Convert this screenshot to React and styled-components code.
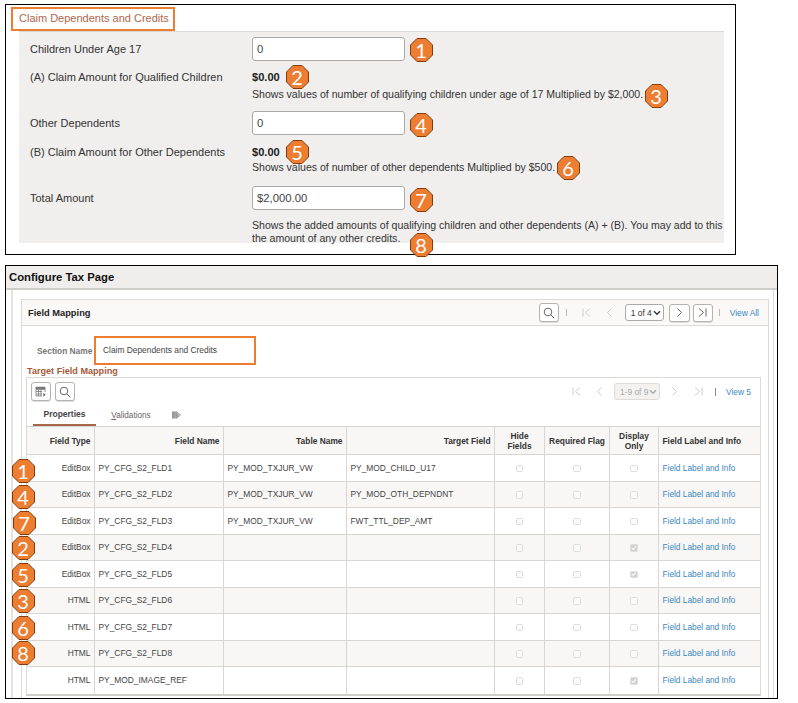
import React from "react";
import styled, { createGlobalStyle } from "styled-components";

const GlobalStyle = createGlobalStyle`
  html, body { margin: 0; padding: 0; background: #fff; }
  * { box-sizing: border-box; }
  body { font-family: "Liberation Sans", Arial, sans-serif; color: #333; }
`;

const Page = styled.div`
  position: relative;
  width: 798px;
  height: 703px;
  padding: 4px 0 0 5px;
  overflow: hidden;
`;

/* ---------- numbered callouts ---------- */

const BadgeWrap = styled.div`
  position: absolute;
  left: ${(p) => p.$x - 11.5}px;
  top: ${(p) => p.$y - 12}px;
  width: 23px;
  height: 24px;
  display: flex;
  align-items: center;
  justify-content: center;
  z-index: 5;

  svg {
    position: absolute;
    inset: 0;
  }

  span {
    position: relative;
    font-family: Lato, "Open Sans", sans-serif;
    font-size: 20px;
    line-height: 24px;
    color: #fff;
  }
`;

const Badge = ({ n, x, y }) => (
  <BadgeWrap $x={x} $y={y}>
    <svg width="23" height="24" viewBox="0 0 23 24">
      <polygon
        points="7,0.5 16,0.5 22.5,7 22.5,17 16,23.5 7,23.5 0.5,17 0.5,7"
        fill="#ed7d31"
        stroke="#843c0c"
      />
    </svg>
    <span>{n}</span>
  </BadgeWrap>
);

/* ---------- top screenshot: claim form ---------- */

const ClaimPanel = styled.section`
  width: 731px;
  height: 251px;
  border: 1px solid #000;
  padding-left: 13px;
`;

const ClaimTitleBar = styled.div`
  height: 26px;
  padding: 2px 0 0 0;
`;

const ClaimTitle = styled.h2`
  margin: 0 0 0 -8px;
  width: 164px;
  height: 24px;
  border: 2px solid #ed7d31;
  padding-left: 6px;
  font-size: 11px;
  font-weight: normal;
  line-height: 19px;
  color: #b0674a;
`;

const ClaimForm = styled.div`
  width: 705px;
  height: 212px;
  background: #f0efee;
  border-top: 1px solid #d9d9d9;
  padding: 5px 0 0 11px;
`;

const FormRow = styled.div`
  display: grid;
  grid-template-columns: 222px 1fr;
  align-items: ${(p) => (p.$top ? "start" : "center")};
  margin-top: ${(p) => p.$mt || 0}px;
`;

const FormLabel = styled.div`
  font-size: 11px;
  line-height: 13px;
  color: #333;
`;

const FormInput = styled.input`
  width: 153px;
  height: 24px;
  border: 1px solid #aaa;
  border-radius: 3px;
  background: #fff;
  padding: 0 4px;
  font-family: inherit;
  font-size: 11.3px;
  color: #444;
`;

const Amount = styled.div`
  font-size: 11.1px;
  font-weight: bold;
  line-height: 13px;
  color: #222;
`;

const Hint = styled.div`
  margin-top: ${(p) => p.$mt || 0}px;
  font-size: 10.55px;
  line-height: 12.5px;
  color: #333;
  white-space: nowrap;
`;

/* ---------- bottom screenshot: configure tax page ---------- */

const ConfigPanel = styled.section`
  margin-top: 10px;
  width: 773px;
  height: 434px;
  border: 1px solid #000;
  display: flex;
  flex-direction: column;
`;

const ConfigTitle = styled.h1`
  margin: 0;
  height: 24px;
  flex: none;
  background: #efeeec;
  border-bottom: 2px solid #cfcdca;
  padding-left: 3px;
  font-size: 11.3px;
  line-height: 22px;
  color: #111;
`;

const ConfigBody = styled.div`
  flex: 1;
  margin: 0 3px 0 5px;
  border-left: 2px solid #e6e4e1;
  border-right: 1px solid #ddd;
  padding: 9px 4px 0 8px;
  display: flex;
`;

const FieldBox = styled.div`
  flex: 1;
  border: 1px solid #dcdad7;
  border-bottom: 0;
  padding-right: 7px;
`;

const FieldHeader = styled.div`
  height: 26px;
  margin-right: -7px;
  background: #faf9f8;
  border-bottom: 1px solid #dcdad7;
  padding: 0 9px 0 6px;
  display: flex;
  align-items: center;
`;

const FieldTitle = styled.div`
  flex: 1;
  font-size: 9.3px;
  font-weight: bold;
  color: #222;
`;

const Pager = styled.div`
  display: flex;
  align-items: center;
  margin-left: auto;
`;

const SquareButton = styled.button`
  width: ${(p) => p.$w || 20}px;
  height: ${(p) => p.$h || 19}px;
  margin-left: ${(p) => p.$ml || 0}px;
  padding: 0;
  flex: none;
  display: flex;
  align-items: center;
  justify-content: center;
  background: #fff;
  border: 1px solid #b5b3b0;
  border-radius: 3px;
  box-shadow: 0 1px 0 #ddd;
`;

const PagerIcon = styled.span`
  width: 23px;
  margin-left: ${(p) => p.$ml || 0}px;
  flex: none;
  display: flex;
  justify-content: center;
`;

const Divider = styled.span`
  width: 1px;
  height: ${(p) => p.$h || 7}px;
  margin: 0 ${(p) => p.$mr || 0}px 0 ${(p) => p.$ml || 0}px;
  background: ${(p) => p.$color || "#bbb"};
  flex: none;
`;

const PageSelect = styled.div`
  width: ${(p) => p.$w}px;
  height: 17px;
  margin-left: 3.5px;
  flex: none;
  display: flex;
  align-items: center;
  justify-content: space-between;
  padding: 0 2px 0 5px;
  border: 1px solid ${(p) => (p.$disabled ? "#dedcd9" : "#aaa")};
  border-radius: 3px;
  background: ${(p) => (p.$disabled ? "#f3f2f1" : "#fff")};
  font-size: 8.4px;
  white-space: nowrap;
  color: ${(p) => (p.$disabled ? "#aaa" : "#333")};
`;

const ViewLink = styled.a`
  margin-left: 10px;
  font-size: 8.4px;
  color: #3a87c0;
  white-space: nowrap;
`;

const SectionRow = styled.div`
  display: flex;
  align-items: center;
  height: 29px;
  margin: 10px 0 0 15px;
`;

const SectionLabel = styled.div`
  width: 57px;
  font-size: 8.4px;
  font-weight: bold;
  color: #777;
  white-space: nowrap;
`;

const SectionValue = styled.div`
  width: 162px;
  height: 29px;
  border: 2px solid #ed7d31;
  padding-left: 7px;
  font-size: 8.4px;
  line-height: 25px;
  color: #444;
`;

const TargetHeading = styled.div`
  height: 12px;
  margin-left: 5px;
  font-size: 9.1px;
  font-weight: bold;
  line-height: 12px;
  color: #a5593a;
`;

const GridBox = styled.div`
  width: 735px;
  margin-left: 4px;
  border: 1px solid #dcdad7;
  border-bottom: 2px solid #cfcdca;
`;

const GridToolbar = styled.div`
  height: 25px;
  display: flex;
  align-items: center;
  padding: 2px 9px 0 4px;
  gap: 4px;
`;

const Tabs = styled.div`
  height: 24px;
  display: flex;
  border-bottom: 1px solid #d5d3d0;
  padding-left: 6px;
`;

const Tab = styled.div`
  width: ${(p) => p.$w}px;
  height: 23px;
  margin-left: ${(p) => p.$ml || 0}px;
  display: flex;
  align-items: center;
  justify-content: center;
  font-size: ${(p) => (p.$active ? 8.5 : 8.2)}px;
  font-weight: ${(p) => (p.$active ? "bold" : "normal")};
  color: ${(p) => (p.$active ? "#444" : "#666")};
  border-bottom: ${(p) => (p.$active ? "2px solid #a5664a" : "0")};
  padding-top: 1px;

  u {
    text-decoration: underline;
  }
`;

const GridRow = styled.div`
  position: relative;
  display: grid;
  grid-template-columns: 68px 129px 123px 148px 50px 65px 49px 101px;
  height: ${(p) => (p.$head ? 28 : 26.5)}px;
  background: ${(p) => (p.$shade ? "#f8f7f5" : "#fff")};
  border-bottom: 1px solid #d8d6d3;
  &:last-child {
    border-bottom: 0;
  }
`;

const Cell = styled.div`
  display: flex;
  align-items: center;
  justify-content: ${(p) =>
    p.$align === "right" ? "flex-end" : p.$align === "center" ? "center" : "flex-start"};
  text-align: ${(p) => p.$align || "left"};
  padding: 1px 3.5px 0;
  border-right: 1px solid #d8d6d3;
  font-size: 8.4px;
  line-height: 9.5px;
  color: #444;
  white-space: nowrap;
  &:last-child {
    border-right: 0;
  }
`;

const HeadCell = styled(Cell)`
  padding-top: 2px;
  font-weight: bold;
  color: #333;
`;

const InfoLink = styled.a`
  font-size: 8.3px;
  color: #3a87c0;
`;

const Check = styled.span`
  width: 7.5px;
  height: 7.5px;
  display: flex;
  align-items: center;
  justify-content: center;
  border: 1px solid #dedede;
  border-radius: 1.5px;
  background: ${(p) => (p.$on ? "#d2d2d2" : "#fafafa")};
`;

/* ---------- icons ---------- */

const glyphs = {
  first: "M2 1.5v8M9 1.5 4.5 5.5 9 9.5",
  prev: "M7.5 1.5 3.5 5.5 7.5 9.5",
  next: "M3.5 1.5 7.5 5.5 3.5 9.5",
  last: "M2 1.5 6.5 5.5 2 9.5M9 1.5v8",
};

const Glyph = ({ name, color = "#666" }) => (
  <svg width="11" height="11" viewBox="0 0 11 11" fill="none" stroke={color} strokeWidth="1">
    <path d={glyphs[name]} />
  </svg>
);

const SearchIcon = () => (
  <svg width="12" height="12" viewBox="0 0 12 12" fill="none" stroke="#666" strokeWidth="1">
    <circle cx="5" cy="5" r="3.8" />
    <path d="m8 8 3.2 3.2" />
  </svg>
);

const Caret = ({ color = "#333" }) => (
  <svg width="8" height="6" viewBox="0 0 8 6" fill="none" stroke={color} strokeWidth="1.4">
    <path d="M1 1.2 4 4.2 7 1.2" />
  </svg>
);

const GridIcon = () => (
  <svg width="12" height="12" viewBox="0 0 12 12" fill="none" stroke="#777" strokeWidth="0.8">
    <path d="M1 1.5h9M1 3h9" strokeWidth="1.4" />
    <path d="M1 1v9h6M1 5.5h6M1 8h6M3.5 4v6M6 4v6M10 1v5" />
    <path d="M8.2 6.8v4l2.6-2z" fill="#777" stroke="none" />
  </svg>
);

const OverflowIcon = () => (
  <svg width="9" height="8" viewBox="0 0 9 8">
    <rect x="0" y="0.5" width="3.5" height="7" fill="#999" />
    <path d="M4 0.5 8.5 4 4 7.5z" fill="none" stroke="#999" />
    <path d="M3.5 0.5 4 7.5 7 4z" fill="#999" />
  </svg>
);

const TickIcon = () => (
  <svg width="6" height="6" viewBox="0 0 6 6" fill="none" stroke="#fff" strokeWidth="1.1">
    <path d="M0.8 3 2.4 4.6 5.2 1.2" />
  </svg>
);

/* ---------- data ---------- */

const topBadges = [
  [1, 421, 50],
  [2, 297, 77],
  [3, 656, 96],
  [4, 421, 125],
  [5, 297, 152],
  [6, 568, 168],
  [7, 421, 200],
  [8, 421, 245],
];

const rows = [
  { type: "EditBox", name: "PY_CFG_S2_FLD1", table: "PY_MOD_TXJUR_VW", target: "PY_MOD_CHILD_U17", badge: 1, y: 471 },
  { type: "EditBox", name: "PY_CFG_S2_FLD2", table: "PY_MOD_TXJUR_VW", target: "PY_MOD_OTH_DEPNDNT", badge: 4, y: 497 },
  { type: "EditBox", name: "PY_CFG_S2_FLD3", table: "PY_MOD_TXJUR_VW", target: "FWT_TTL_DEP_AMT", badge: 7, y: 523 },
  { type: "EditBox", name: "PY_CFG_S2_FLD4", display: true, badge: 2, y: 548 },
  { type: "EditBox", name: "PY_CFG_S2_FLD5", display: true, badge: 5, y: 575 },
  { type: "HTML", name: "PY_CFG_S2_FLD6", badge: 3, y: 601 },
  { type: "HTML", name: "PY_CFG_S2_FLD7", badge: 6, y: 628 },
  { type: "HTML", name: "PY_CFG_S2_FLD8", badge: 8, y: 653 },
  { type: "HTML", name: "PY_MOD_IMAGE_REF", display: true },
];

const App = () => {
  return (
    <Page>
      <GlobalStyle />

      <ClaimPanel>
        <ClaimTitleBar>
          <ClaimTitle>Claim Dependents and Credits</ClaimTitle>
        </ClaimTitleBar>
        <ClaimForm>
          <FormRow>
            <FormLabel>Children Under Age 17</FormLabel>
            <FormInput readOnly value="0" />
          </FormRow>
          <FormRow $top $mt={9.5}>
            <FormLabel>(A) Claim Amount for Qualified Children</FormLabel>
            <div>
              <Amount>$0.00</Amount>
              <Hint $mt={4}>
                Shows values of number of qualifying children under age of 17 Multiplied by $2,000.
              </Hint>
            </div>
          </FormRow>
          <FormRow $mt={11}>
            <FormLabel>Other Dependents</FormLabel>
            <FormInput readOnly value="0" />
          </FormRow>
          <FormRow $top $mt={10.5}>
            <FormLabel>(B) Claim Amount for Other Dependents</FormLabel>
            <div>
              <Amount>$0.00</Amount>
              <Hint $mt={2}>Shows values of number of other dependents Multiplied by $500.</Hint>
            </div>
          </FormRow>
          <FormRow $mt={13}>
            <FormLabel>Total Amount</FormLabel>
            <FormInput readOnly value="$2,000.00" />
          </FormRow>
          <FormRow $top $mt={9}>
            <div />
            <Hint>
              Shows the added amounts of qualifying children and other dependents (A) + (B). You may add to this
              <br />
              the amount of any other credits.
            </Hint>
          </FormRow>
        </ClaimForm>
      </ClaimPanel>

      <ConfigPanel>
        <ConfigTitle>Configure Tax Page</ConfigTitle>
        <ConfigBody>
          <FieldBox>
            <FieldHeader>
              <FieldTitle>Field Mapping</FieldTitle>
              <Pager>
                <SquareButton>
                  <SearchIcon />
                </SquareButton>
                <Divider $ml={7} $mr={8} />
                <PagerIcon>
                  <Glyph name="first" color="#ccc" />
                </PagerIcon>
                <PagerIcon>
                  <Glyph name="prev" color="#ccc" />
                </PagerIcon>
                <PageSelect $w={39}>
                  1 of 4
                  <Caret />
                </PageSelect>
                <SquareButton $w={21} $h={18} $ml={5}>
                  <Glyph name="next" />
                </SquareButton>
                <SquareButton $h={18} $ml={3}>
                  <Glyph name="last" />
                </SquareButton>
                <Divider $ml={6} />
                <ViewLink>View All</ViewLink>
              </Pager>
            </FieldHeader>

            <SectionRow>
              <SectionLabel>Section Name</SectionLabel>
              <SectionValue>Claim Dependents and Credits</SectionValue>
            </SectionRow>
            <TargetHeading>Target Field Mapping</TargetHeading>

            <GridBox>
              <GridToolbar>
                <SquareButton>
                  <GridIcon />
                </SquareButton>
                <SquareButton>
                  <SearchIcon />
                </SquareButton>
                <Pager>
                  <PagerIcon>
                    <Glyph name="first" color="#ccc" />
                  </PagerIcon>
                  <PagerIcon>
                    <Glyph name="prev" color="#ccc" />
                  </PagerIcon>
                  <PageSelect $w={46} $disabled>
                    1-9 of 9
                    <Caret color="#aaa" />
                  </PageSelect>
                  <PagerIcon $ml={2.5}>
                    <Glyph name="next" color="#ccc" />
                  </PagerIcon>
                  <PagerIcon $ml={1}>
                    <Glyph name="last" color="#ccc" />
                  </PagerIcon>
                  <Divider $ml={5.5} $h={8} $color="#888" />
                  <ViewLink>View 5</ViewLink>
                </Pager>
              </GridToolbar>

              <Tabs>
                <Tab $active $w={63}>
                  Properties
                </Tab>
                <Tab $w={40} $ml={15}>
                  <span>
                    <u>V</u>alidations
                  </span>
                </Tab>
                <Tab $w={10} $ml={20}>
                  <OverflowIcon />
                </Tab>
              </Tabs>

              <GridRow $head $shade>
                <HeadCell $align="right">Field Type</HeadCell>
                <HeadCell $align="right">Field Name</HeadCell>
                <HeadCell $align="right">Table Name</HeadCell>
                <HeadCell $align="right">Target Field</HeadCell>
                <HeadCell $align="center">
                  Hide
                  <br />
                  Fields
                </HeadCell>
                <HeadCell $align="center">Required Flag</HeadCell>
                <HeadCell $align="center">
                  Display
                  <br />
                  Only
                </HeadCell>
                <HeadCell>Field Label and Info</HeadCell>
              </GridRow>

              {rows.map((row, i) => (
                <GridRow key={row.name} $shade={i % 2 === 1}>
                  <Cell $align="right">{row.type}</Cell>
                  <Cell>{row.name}</Cell>
                  <Cell>{row.table}</Cell>
                  <Cell>{row.target}</Cell>
                  <Cell $align="center">
                    <Check />
                  </Cell>
                  <Cell $align="center">
                    <Check />
                  </Cell>
                  <Cell $align="center">
                    <Check $on={row.display}>{row.display && <TickIcon />}</Check>
                  </Cell>
                  <Cell>
                    <InfoLink>Field Label and Info</InfoLink>
                  </Cell>
                </GridRow>
              ))}
            </GridBox>
          </FieldBox>
        </ConfigBody>
      </ConfigPanel>

      {topBadges.map(([n, x, y]) => (
        <Badge key={`top-${n}`} n={n} x={x} y={y} />
      ))}
      {rows
        .filter((row) => row.badge)
        .map((row) => (
          <Badge key={row.name} n={row.badge} x={row.badge === 7 ? 24 : 23} y={row.y} />
        ))}
    </Page>
  );
};

export default App;
